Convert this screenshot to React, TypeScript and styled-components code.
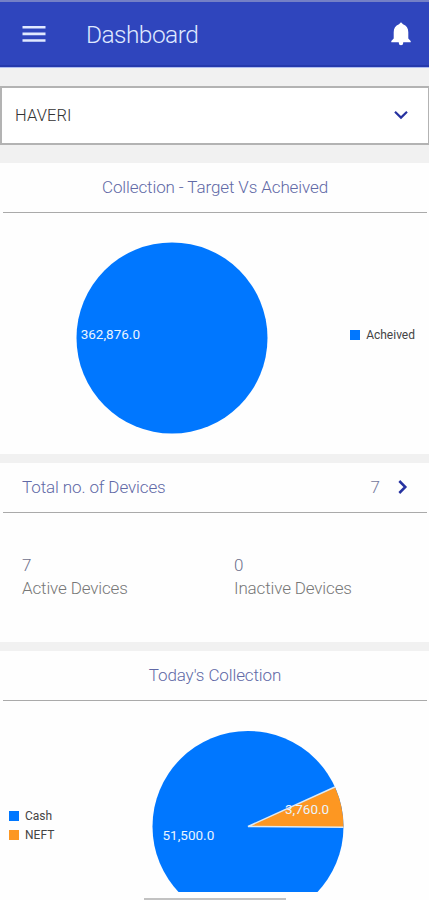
import React from "react";
import styled, { createGlobalStyle } from "styled-components";

const BLUE = "#0077ff";
const ORANGE = "#fd9722";

const GlobalStyle = createGlobalStyle`
  * { box-sizing: border-box; }
  body {
    margin: 0;
    background: #f1f1f1;
    font-family: Roboto, "Liberation Sans", sans-serif;
    font-weight: 300;
  }
`;

const Screen = styled.main`
  width: 429px;
  height: 900px;
  overflow: hidden;
  display: flex;
  flex-direction: column;
  background: #f1f1f1;
`;

const AppBar = styled.header`
  height: 68px;
  flex: none;
  display: flex;
  align-items: center;
  padding: 0 17px 1px 22px;
  background: #2f45bd;
  border-top: 2px solid #7480c6;
  border-bottom: 1px solid #aebcf0;
  box-shadow: inset 0 -2px 0 #2539ac;
`;

const PageTitle = styled.h1`
  flex: 1;
  margin: 0 0 0 40px;
  padding-top: 2px;
  font-size: 24.5px;
  line-height: 28px;
  font-weight: 300;
  letter-spacing: -0.55px;
  color: #dfe8ff;
`;

const Icon = styled.svg`
  display: block;
  flex: none;
`;

const Select = styled.div`
  height: 59px;
  flex: none;
  margin: 18px 0;
  padding: 0 18px 0 13px;
  display: flex;
  align-items: center;
  justify-content: space-between;
  background: #fff;
  border: 2px solid #b3b3b3;
  border-right-width: 1px;
  font-size: 16.5px;
  letter-spacing: 0.1px;
  color: #333;
`;

const Card = styled.section<{ $height: number }>`
  height: ${(p) => p.$height}px;
  flex: none;
  background: #fefefe;

  & + & {
    margin-top: 9px;
  }
`;

const CardHeader = styled.div<{ $center?: boolean }>`
  height: 50px;
  margin: 0 2px 0 3px;
  padding: ${(p) => (p.$center ? "0 19px 2px" : "0 16px 2px 19px")};
  display: flex;
  align-items: center;
  justify-content: ${(p) => (p.$center ? "center" : "space-between")};
  border-bottom: 1px solid #aaa;
`;

const CardTitle = styled.h2`
  margin: 0;
  font-size: 17px;
  line-height: 20px;
  font-weight: 300;
  letter-spacing: -0.11px;
  color: #6169a6;
`;

const Total = styled.div`
  display: flex;
  align-items: center;
  gap: 13px;
  font-size: 17px;
  color: #73779c;
`;

const ChartRow = styled.div<{ $height: number; $reverse?: boolean }>`
  height: ${(p) => p.$height}px;
  display: flex;
  flex-direction: ${(p) => (p.$reverse ? "row-reverse" : "row")};
  justify-content: space-between;
  padding: ${(p) => (p.$reverse ? "30px 85px 0 9px" : "29px 14px 0 76px")};
  overflow: hidden;
`;

const Legend = styled.ul<{ $top: number }>`
  margin: ${(p) => p.$top}px 0 0;
  padding: 0;
  list-style: none;
`;

const LegendItem = styled.li`
  height: 18.5px;
  display: flex;
  align-items: center;
  gap: 6px;
  font-size: 12px;
  font-weight: 400;
  color: #444;
`;

const Swatch = styled.span<{ $color: string }>`
  width: 10px;
  height: 10px;
  background: ${(p) => p.$color};
`;

const PieText = styled.text`
  font-size: 13.5px;
  font-weight: 400;
  fill: #e9f4ff;
`;

const Stats = styled.div`
  display: grid;
  grid-template-columns: 212px 1fr;
  padding: 41px 0 0 22px;
`;

const Stat = styled.div`
  font-size: 17px;
  line-height: 23px;
  letter-spacing: -0.14px;
  color: #777;
`;

const StatValue = styled.div`
  color: #6d708c;
`;

const Footer = styled.footer`
  height: 8px;
  flex: none;
  display: flex;
  align-items: flex-end;
  justify-content: center;
  background: #fefefe;
`;

const HomeBar = styled.div`
  width: 142px;
  height: 2px;
  background: #c2c2c2;
`;

type LegendEntry = { name: string; color: string };

function ChartLegend({ items, top }: { items: LegendEntry[]; top: number }) {
  return (
    <Legend $top={top}>
      {items.map((item) => (
        <LegendItem key={item.name}>
          <Swatch $color={item.color} />
          {item.name}
        </LegendItem>
      ))}
    </Legend>
  );
}

export default function App() {
  return (
    <>
      <GlobalStyle />
      <Screen>
        <AppBar>
          <Icon width="24" height="18" viewBox="0 0 24 18" aria-label="Menu">
            <path d="M0.5 2.3h23M0.5 8.9h23M0.5 15.5h23" stroke="#e1e9ff" strokeWidth="2.6" />
          </Icon>
          <PageTitle>Dashboard</PageTitle>
          <Icon width="22" height="26" viewBox="0 0 22 26" aria-label="Notifications">
            <path
              fill="#fff"
              d="M9 3.3 11 1.2l2 2.1c3.6 1.2 5.3 4.3 5.3 7.9v6.4l2.4 2.5v1.2H1.3v-1.2l2.4-2.5v-6.4c0-3.6 1.7-6.7 5.3-7.9ZM8.8 21.3h4.4v.8a2.2 2.2 0 0 1-4.4 0Z"
            />
          </Icon>
        </AppBar>
        <Select>
          HAVERI
          <Icon width="18" height="12" viewBox="0 0 18 12">
            <path d="M3 1.8l6 5.8 6-5.8" fill="none" stroke="#2632a0" strokeWidth="2.2" />
          </Icon>
        </Select>
        <Card $height={291}>
          <CardHeader $center>
            <CardTitle>Collection - Target Vs Acheived</CardTitle>
          </CardHeader>
          <ChartRow $height={241}>
            <Icon width="192" height="192" viewBox="0 0 192 192">
              <circle cx="96" cy="96" r="95.5" fill={BLUE} />
              <PieText x="4.7" y="97">362,876.0</PieText>
            </Icon>
            <ChartLegend top={84} items={[{ name: "Acheived", color: BLUE }]} />
          </ChartRow>
        </Card>
        <Card $height={179}>
          <CardHeader>
            <CardTitle>Total no. of Devices</CardTitle>
            <Total>
              7
              <Icon width="18" height="18" viewBox="0 0 18 18">
                <path d="M6.3 3l6 6-6 6" fill="none" stroke="#2632a0" strokeWidth="2.5" />
              </Icon>
            </Total>
          </CardHeader>
          <Stats>
            <Stat>
              <StatValue>7</StatValue>
              Active Devices
            </Stat>
            <Stat>
              <StatValue>0</StatValue>
              Inactive Devices
            </Stat>
          </Stats>
        </Card>
        <Card $height={241}>
          <CardHeader $center>
            <CardTitle>Today's Collection</CardTitle>
          </CardHeader>
          <ChartRow $height={191} $reverse>
            <Icon width="192" height="192" viewBox="0 0 192 192">
              <circle cx="96" cy="95.5" r="95.5" fill={BLUE} />
              <path d="M96 95.5L182.9 56A95.5 95.5 0 0 1 191.5 96.2Z" fill={ORANGE} />
              <path d="M182.9 56L96 95.5L191.5 96.2" fill="none" stroke="#dceaf5" strokeWidth="1.4" />
              <PieText x="10.5" y="109">51,500.0</PieText>
              <PieText x="133" y="83">3,760.0</PieText>
            </Icon>
            <ChartLegend
              top={76}
              items={[
                { name: "Cash", color: BLUE },
                { name: "NEFT", color: ORANGE },
              ]}
            />
          </ChartRow>
        </Card>
        <Footer>
          <HomeBar />
        </Footer>
      </Screen>
    </>
  );
}
